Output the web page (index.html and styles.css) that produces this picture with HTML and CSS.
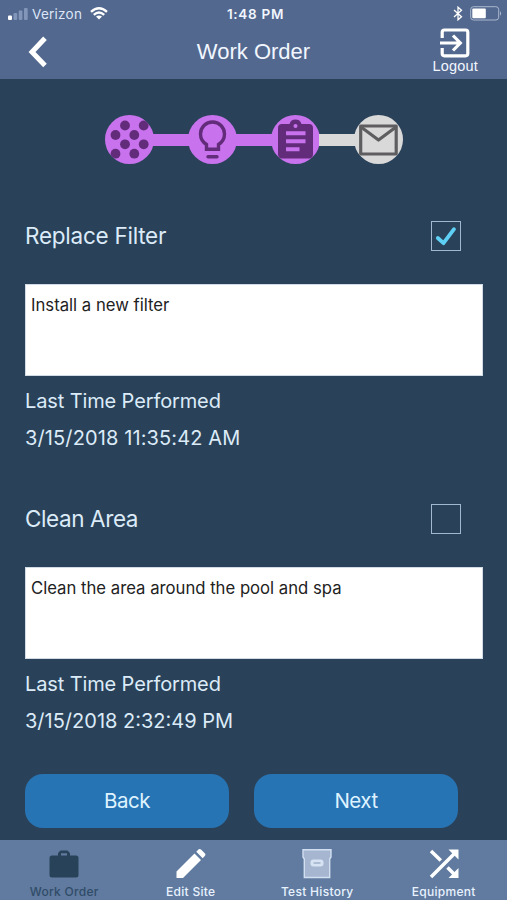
FILE: index.html
```html
<!DOCTYPE html>
<html lang="en">
<head>
<meta charset="utf-8">
<title>Work Order</title>
<link rel="stylesheet" href="styles.css">
</head>
<body>
<div class="app">
  <header class="header">
    <div class="status">
      <div class="carrier">
        <svg class="signal" width="20" height="12" viewBox="0 0 20 12"><rect x="0" y="7.500" width="4" height="4.500" rx="1" fill="#fff"/><g fill="#8296b9"><rect x="5.500" y="5" width="3.700" height="7" rx="1"/><rect x="10.700" y="2.500" width="3.700" height="9.500" rx="1"/><rect x="16" y="0" width="3.700" height="12" rx="1"/></g></svg>
        <span class="carrier-name">Verizon</span>
        <svg width="18" height="13" viewBox="0 0 18 13" fill="none" stroke="#fff" stroke-width="2.400"><path d="M1 4.900Q9-2.200 17 4.900M3.800 7.900Q9 3.200 14.200 7.900"/><path d="M6 9.600Q9 7.300 12 9.600L9 12.600Z" fill="#fff" stroke="none"/></svg>
      </div>
      <span class="clock">1:48 PM</span>
      <div class="power">
        <svg width="10" height="15" viewBox="0 0 10 15" fill="none" stroke="#fff" stroke-width="1.300"><path d="M1 4L8.500 10.700 5 13.800V1.200L8.500 4.300 1 11"/></svg>
        <svg width="32" height="15" viewBox="0 0 32 15"><rect x=".7" y=".7" width="28" height="13.300" rx="2.800" fill="none" stroke="#aab7cf"/><rect x="2.300" y="2.500" width="13.500" height="9.800" rx="1" fill="#fff"/><path d="M30 5q2.200 2.400 0 4.800z" fill="#aab7cf"/></svg>
      </div>
    </div>
    <div class="nav">
      <svg class="chevron" width="20" height="32" viewBox="0 0 20 32" fill="none" stroke="#fff" stroke-width="5"><path d="M17 2.200L4 16 17 29.600"/></svg>
      <h1 class="title">Work Order</h1>
      <div class="logout">
        <svg width="30" height="30" viewBox="0 0 30 30" fill="none" stroke="#fff" stroke-width="3.200"><path d="M2.200 10V4.200Q2.200 2 4.400 2H25.600Q27.800 2 27.800 4.200V25.600Q27.800 27.800 25.600 27.800H4.400Q2.200 27.800 2.200 25.600V20M0 15H20M13 7.500L20.300 15 13 22.500"/></svg>
        <span>Logout</span>
      </div>
    </div>
  </header>

  <main class="content">
    <div class="stepper">
      <svg class="step done" width="49" height="49" viewBox="0 0 49 49"><g fill="#622c7b"><circle cx="20" cy="10.500" r="4.900"/><circle cx="38.700" cy="10.500" r="4.900"/><circle cx="10.500" cy="20" r="4.900"/><circle cx="29.300" cy="20" r="4.900"/><circle cx="20" cy="29.300" r="4.900"/><circle cx="38.700" cy="29.300" r="4.900"/><circle cx="10.500" cy="38.700" r="4.900"/><circle cx="29.300" cy="38.700" r="4.900"/></g></svg>
      <div class="link done"></div>
      <svg class="step done" width="49" height="49" viewBox="0 0 49 49" fill="none" stroke="#622c7b" stroke-width="3.400"><path d="M18.500 34.300V29.500C14.500 27 12.500 23.300 12.500 19A12 12 0 0 1 36.500 19C36.500 23.300 34.500 27 30.500 29.500V34.300Z"/><path d="M20 41.700H29" stroke-linecap="round"/></svg>
      <div class="link done"></div>
      <svg class="step done" width="49" height="49" viewBox="0 0 49 49"><path d="M11 9H18.500A6.300 6.300 0 0 1 30.500 9H38Q42 9 42 13V39Q42 43.500 38 43.500H11Q7 43.500 7 39V13Q7 9 11 9Z" fill="#622c7b"/><circle cx="24.500" cy="11" r="2" fill="#c873ed"/><path d="M15 18.300H34.500M15 26.300H34.500M15 34.300H28.500" stroke="#c873ed" stroke-width="4"/></svg>
      <div class="link"></div>
      <svg class="step" width="49" height="49" viewBox="0 0 49 49" fill="none" stroke="#5e5d60" stroke-width="3.200" stroke-linejoin="round"><rect x="6.700" y="11" width="35.500" height="28"/><path d="M7 12L24.500 25 42 12"/></svg>
    </div>

    <section class="task">
      <div class="task-head">
        <h2>Replace Filter</h2>
        <span class="check"><svg width="28" height="28" viewBox="0 0 28 28" fill="none" stroke="#5fd0f5" stroke-width="3.800" stroke-linecap="round" stroke-linejoin="round"><path d="M5.800 16L11.500 21.200 22 7.200"/></svg></span>
      </div>
      <div class="note">Install a new filter</div>
      <div class="meta"><p class="meta-label">Last Time Performed</p><p class="date-first">3/15/2018 11:35:42 AM</p></div>
    </section>

    <section class="task">
      <div class="task-head">
        <h2 class="tight">Clean Area</h2>
        <span class="check"></span>
      </div>
      <div class="note">Clean the area around the pool and spa</div>
      <div class="meta"><p class="meta-label">Last Time Performed</p><p>3/15/2018 2:32:49 PM</p></div>
    </section>

    <div class="actions">
      <button class="btn">Back</button>
      <button class="btn">Next</button>
    </div>
  </main>

  <footer class="tabs">
    <div class="tab active">
      <svg width="32" height="32" viewBox="0 0 32 32"><path d="M4 8.500H10V6L12.500 3.500H19.500L22 6V8.500H28Q30.500 8.500 30.500 11V28Q30.500 30.500 28 30.500H4Q1.500 30.500 1.500 28V11Q1.500 8.500 4 8.500ZM13 8.500H19V6.300H13Z" fill="#28425a" fill-rule="evenodd"/></svg>
      <span>Work Order</span>
    </div>
    <div class="tab">
      <svg width="32" height="32" viewBox="0 0 32 32" fill="#fff"><path d="M1.500 24.500L19.500 6.500 26 13 8 31H1.500ZM21.300 4.700L23.700 2.300Q24.800 1.400 26 2.500L30 6.500Q31 7.500 30 8.700L27.700 11.200Z"/></svg>
      <span>Edit Site</span>
    </div>
    <div class="tab">
      <svg width="32" height="32" viewBox="0 0 32 32"><path d="M2 2.700H30V10L28.700 12V30.500H3.300V12L2 10Z" fill="#a6b6d0" stroke="#d2dff1" stroke-width="1.400"/><rect x="9.500" y="12.500" width="13" height="7" rx="3" fill="#d7e3f3"/><path d="M12.500 16H19.500" stroke="#9eb0ca" stroke-width="1.500"/></svg>
      <span>Test History</span>
    </div>
    <div class="tab">
      <svg width="32" height="32" viewBox="0 0 32 32"><path d="M3 4L12.800 13.600M3 30L27 6M19.500 20.500L27 28" fill="none" stroke="#fff" stroke-width="3.500"/><path d="M20.500 2.500H30.500V12.500ZM30.500 21V31H20.500Z" fill="#fff"/></svg>
      <span>Equipment</span>
    </div>
  </footer>
</div>
</body>
</html>
```

FILE: styles.css
```css
* { box-sizing: border-box; }
body, h1, h2, p { margin: 0; font-weight: 400; }
svg { display: block; flex: none; }

.app {
  width: 507px;
  height: 900px;
  display: flex;
  flex-direction: column;
  background: #2a4259;
  color: #dcebf8;
  font-family: Inter, "Liberation Sans", sans-serif;
  overflow: hidden;
  white-space: nowrap;
}

.header { height: 79px; background: #53688e; color: #f1f6ff; }
.status {
  height: 26px;
  padding: 0 4px 0 8px;
  display: grid;
  grid-template-columns: 1fr auto 1fr;
  align-items: center;
  font-size: 13.500px;
}
.carrier, .power { display: flex; align-items: center; }
.carrier-name { margin: 1px 8px 0 4px; color: #dce6f8; letter-spacing: .25px; }
.signal { margin-top: 2px; }
.clock { font-weight: 600; font-size: 13.500px; letter-spacing: .7px; margin-top: 1px; }
.power { justify-content: flex-end; gap: 7px; padding-right: 1px; }

.nav {
  height: 53px;
  padding: 0 29px 0 28px;
  display: grid;
  grid-template-columns: 1fr auto 1fr;
  align-items: center;
}
.chevron { margin-top: -2px; }
.title { font: 22px/26px "Liberation Sans", sans-serif; margin: -2px 0 0 1px; }
.logout {
  justify-self: end;
  display: flex;
  flex-direction: column;
  align-items: center;
  font: 14.500px/16px "Liberation Sans", sans-serif;
  letter-spacing: .2px;
  margin-top: -3px;
}

.content { height: 761px; padding: 36px 25px 0; }
.stepper { display: flex; align-items: center; margin-left: 79.500px; height: 49px; }
.step { border-radius: 50%; background: #dad9da; }
.link { width: 36.300px; height: 12px; margin: 0 -1px; background: #dad9da; }
.done { background: #c873ed; }

.task { margin-top: 48px; }
.stepper + .task { margin-top: 57px; }
.task-head { display: flex; justify-content: space-between; align-items: center; height: 30px; padding-right: 21px; }
h2 { font-size: 22.500px; line-height: 30px; letter-spacing: -.25px; margin-top: -1px; }
.tight { letter-spacing: -.4px; }
.check { width: 30px; height: 30px; border: 1px solid #a1b8d0; }
.note {
  height: 92px;
  margin: 33px 0 6px;
  padding: 10px 5px;
  width: 458px;
  background: #fff;
  border: 1px solid #d0dbe5;
  color: #222;
  font-size: 16.700px;
  line-height: 20px;
}
.meta { font-size: 20px; line-height: 37px; height: 74px; padding-top: 1px; }
.meta-label { letter-spacing: -.12px; }
.date-first { letter-spacing: .12px; }

.actions { display: flex; gap: 25px; margin-top: 35px; }
.btn {
  width: 204px;
  height: 54px;
  border: 0;
  padding: 0 0 1px;
  border-radius: 18px;
  background: #2774b5;
  color: #dff3ff;
  font: 20.500px Inter, sans-serif;
  letter-spacing: -.5px;
}

.tabs { height: 60px; padding-left: 1px; background: #607b9f; display: grid; grid-template-columns: repeat(4, 1fr); }
.tab {
  display: flex;
  flex-direction: column;
  align-items: center;
  padding-top: 7px;
  color: #e8f2ff;
  font-size: 12px;
  font-weight: 500;
  line-height: 16px;
  letter-spacing: .3px;
}
.tab span { margin-top: 5px; }
.active { color: #304b68; }
```
